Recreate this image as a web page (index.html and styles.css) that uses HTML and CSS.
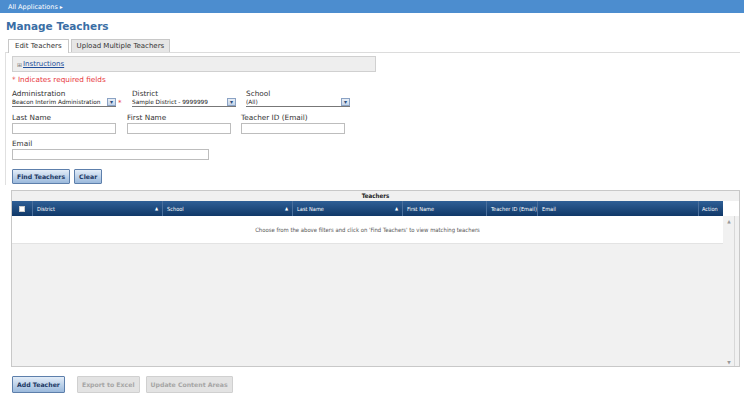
FILE: index.html
```html
<!DOCTYPE html>
<html>
<head>
<meta charset="utf-8">
<link rel="stylesheet" href="styles.css">
</head>
<body>
<div class="topbar"><span class="apps">All Applications</span><span class="tri">&#9656;</span></div>
<h1 class="title">Manage Teachers</h1>
<div class="tabs">
  <div class="tab active">Edit Teachers</div>
  <div class="tab">Upload Multiple Teachers</div>
</div>
<div class="panel">
  <div class="instructions"><span class="plus">&#8862;</span><a href="#" class="inst-link">Instructions</a></div>
  <div class="required">* Indicates required fields</div>
  <div class="row row-selects">
    <div class="field f-admin">
      <label>Administration</label>
      <div class="sel-wrap"><div class="select narrow"><span class="sel-text">Beacon Interim Administration</span><span class="arrow">&#9662;</span></div><span class="star">*</span></div>
    </div>
    <div class="field f-district">
      <label>District</label>
      <div class="select"><span class="sel-text">Sample District - 9999999</span><span class="arrow">&#9662;</span></div>
    </div>
    <div class="field f-school">
      <label>School</label>
      <div class="select"><span class="sel-text">(All)</span><span class="arrow">&#9662;</span></div>
    </div>
  </div>
  <div class="row row-inputs">
    <div class="field f-last"><label>Last Name</label><div class="input"></div></div>
    <div class="field f-first"><label>First Name</label><div class="input"></div></div>
    <div class="field f-tid"><label>Teacher ID (Email)</label><div class="input"></div></div>
  </div>
  <div class="row row-email">
    <div class="field"><label>Email</label><div class="input wide"></div></div>
  </div>
  <div class="row row-btns">
    <button class="btn">Find Teachers</button>
    <button class="btn">Clear</button>
  </div>
</div>
<div class="grid">
  <div class="caption">Teachers</div>
  <div class="grid-body">
    <div class="grid-main">
      <div class="thead">
        <div class="th c-chk"><span class="chk"></span></div>
        <div class="th c-district">District<span class="sort">&#9650;</span></div>
        <div class="th c-school">School<span class="sort">&#9650;</span></div>
        <div class="th c-last">Last Name<span class="sort">&#9650;</span></div>
        <div class="th c-first">First Name</div>
        <div class="th c-tid">Teacher ID (Email)</div>
        <div class="th c-email">Email</div>
        <div class="th c-action">Action</div>
      </div>
      <div class="msg">Choose from the above filters and click on 'Find Teachers' to view matching teachers</div>
      <div class="empty"></div>
    </div>
    <div class="scroll">
      <div class="scroll-top"></div>
      <div class="scroll-track"><span class="sarrow">&#9650;</span><span class="sarrow">&#9660;</span></div>
    </div>
  </div>
</div>
<div class="bottom-btns">
  <button class="btn add">Add Teacher</button>
  <button class="btn disabled">Export to Excel</button>
  <button class="btn disabled">Update Content Areas</button>
</div>
</body>
</html>
```
FILE: styles.css
```css
* { box-sizing: border-box; }
body {
  margin: 0;
  width: 744px;
  height: 408px;
  overflow: hidden;
  background: #fff;
  font-family: "DejaVu Sans", Verdana, sans-serif;
  font-size: 7.3px;
  color: #333;
}
.topbar {
  height: 13px;
  background: #4c8dcf;
  color: #fff;
  font-size: 6.5px;
  padding-left: 8px;
  display: flex;
  align-items: center;
}
.topbar .tri { font-size: 6px; margin-left: 2px; }
.title {
  margin: 5px 0 0 6px;
  font-size: 10.5px;
  font-weight: bold;
  color: #3a6ea5;
  height: 16px;
  line-height: 16px;
}
.tabs {
  display: flex;
  margin: 5px 0 0 8px;
  height: 13px;
  align-items: flex-end;
}
.tab {
  height: 13px;
  padding: 0 5px;
  border: 1px solid #c8c8c8;
  border-bottom: none;
  background: #e6e6e6;
  font-size: 7px;
  line-height: 12px;
  color: #333;
  margin-right: 2px;
}
.tab.active {
  background: #fff;
  height: 14px;
  margin-bottom: -1px;
  position: relative;
  z-index: 1;
  padding: 0 6px;
}
.panel {
  margin: 0 4px 0 5px;
  border-top: 1px solid #dcdcdc;
  border-left: 1px solid #e0e0e0;
  padding: 3px 0 1px 6px;
}
.instructions {
  width: 364px;
  height: 16px;
  background: #eeeeee;
  border: 1px solid #d0d0d0;
  display: flex;
  align-items: center;
  padding-left: 4px;
  font-size: 7px;
}
.plus { font-size: 6px; color: #777; margin-right: 1px; }
.inst-link { color: #1f4e9c; text-decoration: underline; }
.required { color: #e8393e; margin-top: 3px; height: 10px; line-height: 10px; }
.row { display: flex; }
.row-selects { margin-top: 5px; }
.field label { display: block; font-size: 7.3px; color: #333; line-height: 8px; height: 8px; }
.f-admin { width: 120px; }
.f-district { width: 114px; }
.f-school { width: 110px; }
.sel-wrap { display: flex; align-items: center; }
.select {
  width: 104px;
  height: 9px;
  border-bottom: 1px solid #777;
  display: flex;
  align-items: center;
  justify-content: space-between;
  font-size: 5.8px;
  color: #222;
  overflow: hidden;
}
.sel-text { white-space: nowrap; overflow: hidden; flex: 1; line-height: 9px; }
.arrow {
  width: 9px;
  height: 8px;
  flex: none;
  background: linear-gradient(#e8eef6, #c4d4e8);
  border: 1px solid #8aa2c4;
  color: #2c4d7c;
  font-size: 6px;
  line-height: 6px;
  text-align: center;
}
.star { color: #e8393e; margin-left: 2px; font-size: 7px; }
.row-inputs { margin-top: 7px; }
.f-last { width: 115px; }
.f-first { width: 114px; }
.f-tid { width: 110px; }
.input {
  width: 104px;
  height: 11px;
  border: 1px solid #bdbdbd;
  margin-top: 1px;
  background: #fff;
}
.input.wide { width: 197px; }
.row-email { margin-top: 6px; }
.row-btns { margin-top: 9px; gap: 4px; }
.btn {
  height: 15px;
  padding: 0 4px;
  border: 1px solid #5d7fab;
  border-radius: 1px;
  background: linear-gradient(#e3edf8, #9bb9dc);
  color: #1b3763;
  font-family: "DejaVu Sans", Verdana, sans-serif;
  font-size: 6.2px;
  font-weight: bold;
  line-height: 13px;
  margin: 0;
}
.btn.disabled {
  background: #e3e3e3;
  border-color: #d0d0d0;
  color: #a6a6a6;
}
.grid {
  margin: 5px 4px 0 11px;
  border: 1px solid #c8c8c8;
  height: 177px;
  display: flex;
  flex-direction: column;
}
.caption {
  height: 10px;
  background: #f0f0f0;
  font-weight: bold;
  text-align: center;
  font-size: 6.2px;
  line-height: 10px;
  color: #222;
  font-family: "DejaVu Sans Condensed", "DejaVu Sans", sans-serif;
}
.grid-body { flex: 1; display: flex; }
.grid-main { width: 711px; display: flex; flex-direction: column; }
.thead {
  height: 15px;
  display: flex;
  background: linear-gradient(#2f5f96, #103868);
  color: #fff;
  font-family: "DejaVu Sans Condensed", "DejaVu Sans", sans-serif;
  font-size: 5.6px;
}
.th {
  height: 15px;
  display: flex;
  align-items: center;
  padding-left: 4px;
  border-right: 1px solid #4a6f9c;
  white-space: nowrap;
  overflow: hidden;
}
.th:last-child { border-right: none; }
.c-chk { width: 21px; justify-content: center; padding-left: 0; }
.chk { width: 6px; height: 6px; background: #fff; border: 1px solid #ccc; }
.c-district { width: 130px; justify-content: space-between; padding-right: 4px; }
.c-school { width: 130px; justify-content: space-between; padding-right: 4px; }
.c-last { width: 110px; justify-content: space-between; padding-right: 4px; }
.c-first { width: 84px; }
.c-tid { width: 51px; }
.c-email { width: 161px; }
.c-action { width: 24px; padding-left: 3px; }
.sort { font-size: 4.5px; }
.msg {
  height: 28px;
  background: #fff;
  text-align: center;
  line-height: 28px;
  font-family: "DejaVu Sans Condensed", "DejaVu Sans", sans-serif;
  font-size: 5.9px;
  color: #555;
  border-bottom: 1px solid #e3e3e3;
}
.empty { flex: 1; background: #f1f1f1; }
.scroll { flex: 1; display: flex; flex-direction: column; background: #f1f1f1; }
.scroll-top { height: 15px; background: #fff; }
.scroll-track {
  flex: 1;
  display: flex;
  flex-direction: column;
  justify-content: space-between;
  align-items: center;
  padding: 3px 0 1px;
  border-right: 1px solid #d8d8d8;
  width: 11px;
  margin-left: 1px;
}
.sarrow { font-size: 4.5px; color: #999; }
.bottom-btns {
  display: flex;
  gap: 6px;
  margin: 9px 0 0 12px;
}
.bottom-btns .btn { height: 17px; line-height: 15px; }
.bottom-btns .add { margin-right: 6px; }
```
